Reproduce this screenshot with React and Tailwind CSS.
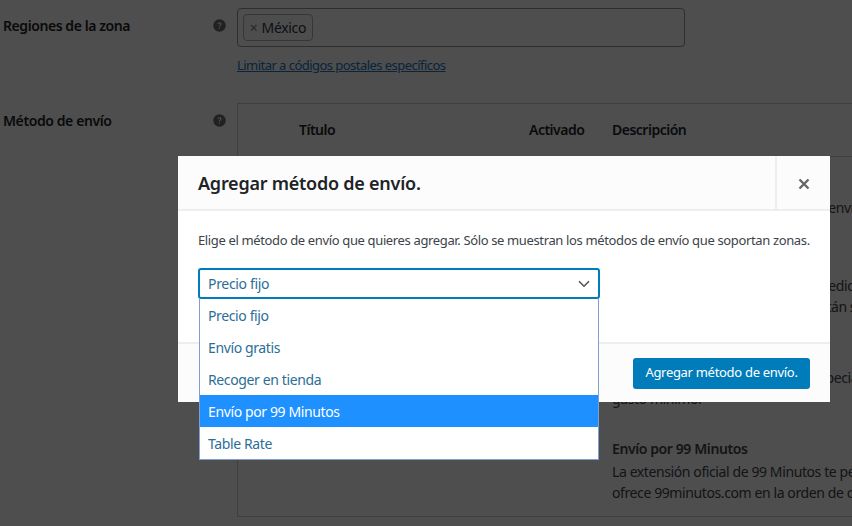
const font = { fontFamily: '"Noto Sans", "Open Sans", sans-serif' };

function Help() {
  return (
    <svg width="13" height="13" viewBox="0 0 13 13" className="shrink-0">
      <circle cx="6.5" cy="6.5" r="6.2" fill="#666" />
      <path d="M4.5 5.1c0-1.2.9-1.9 2-1.9s2 .7 2 1.7c0 1.4-1.5 1.4-1.5 2.6H5.9c0-1.7 1.4-1.7 1.4-2.5 0-.4-.3-.7-.8-.7s-.8.3-.9.8H4.5zM5.9 8.5H7v1.3H5.9z" fill="#f1f1f1" />
    </svg>
  );
}

function MethodRow({ lines, className = "" }) {
  return (
    <div className={`flex ${className}`}>
      <div className="w-[374px] shrink-0" />
      <div className="flex-1 whitespace-nowrap text-[14px] leading-[21px] tracking-[-0.4px] text-[#3c434a]">
        {lines.map((l, i) => (
          <div key={i}>{l}</div>
        ))}
      </div>
    </div>
  );
}

const options = ["Precio fijo", "Envío gratis", "Recoger en tienda", "Envío por 99 Minutos", "Table Rate"];

export default function App() {
  return (
    <div style={font} className="relative h-[526px] w-[852px] overflow-hidden bg-[#f1f1f1] text-[#3c434a]">
      <div className="flex pt-2">
        <div className="flex h-[95px] w-[237px] shrink-0 items-start justify-between pl-[3px] pr-[11px] pt-[10px] text-[14px] font-semibold leading-4 tracking-[-0.43px] text-[#1d2327]">
          <span>Regiones de la zona</span>
          <span className="mt-[1px]"><Help /></span>
        </div>
        <div>
          <div className="h-[39px] w-[448px] rounded border border-[#8c8f94] p-[5px]">
            <span className="flex h-[27px] w-[70px] items-center justify-center gap-1 rounded border border-[#aaa] bg-[#f0f0f1] text-[14px] tracking-[-0.3px] text-[#2c3338]">
              <span className="text-[#777]">×</span>México
            </span>
          </div>
          <a className="mt-[10px] block text-[13px] leading-4 tracking-[-0.54px] text-[#2271b1] underline">Limitar a códigos postales específicos</a>
        </div>
      </div>
      <div className="flex">
        <div className="flex w-[237px] shrink-0 items-start justify-between pl-[3px] pr-[11px] pt-[10px] text-[14px] font-semibold leading-4 tracking-[-0.4px] text-[#1d2327]">
          <span>Método de envío</span>
          <span className="mt-[1px]"><Help /></span>
        </div>
        <div className="w-[700px] border-l border-t border-[#c3c4c7]">
          <div className="flex h-[53px] items-center border-b border-[#c3c4c7] pb-[2px] text-[14px] font-semibold tracking-[-0.5px] text-[#1d2327]">
            <span className="ml-[61px] w-[230px]">Título</span>
            <span className="w-[83px]">Activado</span>
            <span>Descripción</span>
          </div>
          <MethodRow className="h-[98px] pt-[40px]" lines={[<span className="tracking-[-0.48px]">Permite cobrar una tarifa fija por el envío.</span>]} />
          <MethodRow className="h-[92px] pt-[20px]" lines={["Envío gratis si se cumplen con un pedido mínimo", <span className="tracking-[-0.48px]">para todos los clientes fieles que están sujetos a condiciones</span>]} />
          <MethodRow className="h-[70px] pt-[20px]" lines={["Permite recoger los pedidos, en especial", "gasto mínimo."]} />
          <div className="flex h-[100px] border-b border-[#c3c4c7] pt-[21px]">
            <div className="flex w-[374px] shrink-0 justify-end pr-[29px]">
              <div className="mt-[-20px] h-[25px] w-[28px] rounded-b-full bg-[#6b1f6b]" />
            </div>
            <div className="whitespace-nowrap text-[14px] leading-[21px] tracking-[-0.4px] text-[#3c434a]">
              <div className="font-semibold">Envío por 99 Minutos</div>
              <div className="mt-[2px]">La extensión oficial de 99 Minutos te permite usar</div>
              <div>ofrece 99minutos.com en la orden de compra</div>
            </div>
          </div>
        </div>
      </div>

      <div className="absolute inset-0 bg-black/[.68]" />

      <div className="absolute left-[178px] top-[156px] flex h-[246px] w-[652px] flex-col bg-white text-[#3c434a]">
        <div className="flex h-[55px] shrink-0 items-stretch border-b-2 border-[#eeeeee] bg-[#fcfcfc]">
          <h1 className="flex flex-1 items-center pl-5 pt-[2px] text-[18px] font-semibold tracking-[-0.24px] text-[#1d2327]">Agregar método de envío.</h1>
          <button className="flex w-[55px] items-center justify-center border-l-2 border-[#eeeeee] pt-[2px]">
            <svg width="12" height="12" viewBox="0 0 12 12"><path d="M1.5 1.5l9 9M10.5 1.5l-9 9" stroke="#666" strokeWidth="2.4" /></svg>
          </button>
        </div>
        <div className="flex-1 px-5 pt-[20px]">
          <p className="whitespace-nowrap text-[13px] leading-[19px] tracking-[-0.36px]">Elige el método de envío que quieres agregar. Sólo se muestran los métodos de envío que soportan zonas.</p>
        </div>
        <div className="flex h-[60px] shrink-0 items-center justify-end border-t-2 border-[#eeeeee] bg-[#fcfcfc] pr-5">
          <button className="h-[31px] w-[177px] rounded-[3px] bg-[#007cba] text-[13px] tracking-[-0.3px] text-white">Agregar método de envío.</button>
        </div>
      </div>

      <div className="absolute left-[198px] top-[268px] w-[402px]">
        <div className="flex h-[31px] items-center justify-between rounded-[3px] border-2 border-[#007cba] bg-white px-[8px] text-[14px] tracking-[-0.33px] text-[#2c6e96]">
          <span>Precio fijo</span>
          <svg width="12" height="8" viewBox="0 0 12 8"><path d="M1 1.2l5 5 5-5" fill="none" stroke="#555" strokeWidth="1.6" /></svg>
        </div>
        <ul className="mx-[1px] border border-t-0 border-[#7c9fd8] bg-white text-[14px] tracking-[-0.38px]">
          {options.map((o) => (
            <li key={o} className={`flex h-8 items-center pl-[8px] pt-[1px] ${o === "Envío por 99 Minutos" ? "bg-[#1e90ff] text-white" : "text-[#2c6e96]"}`}>{o}</li>
          ))}
        </ul>
      </div>
    </div>
  );
}
